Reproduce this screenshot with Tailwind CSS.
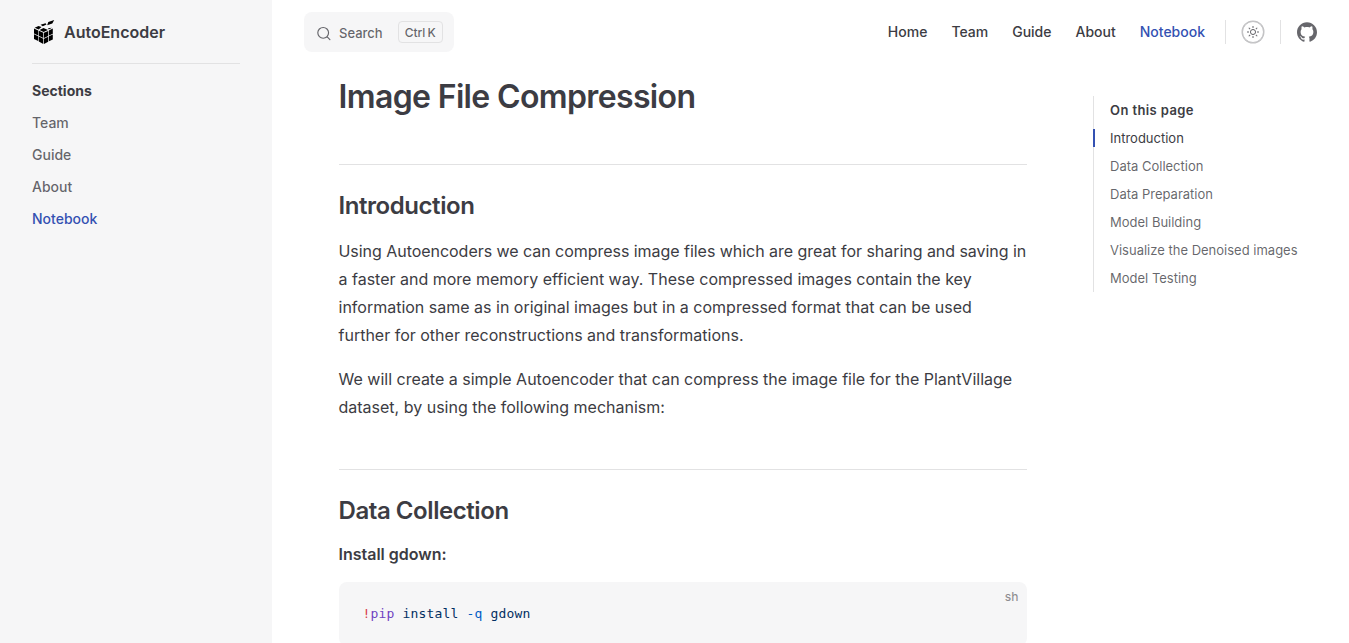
<!DOCTYPE html>
<html lang="en">
<head>
<meta charset="utf-8">
<title>Image File Compression | AutoEncoder</title>
<script src="https://cdn.jsdelivr.net/npm/@tailwindcss/browser@4"></script>
</head>
<body class="h-[643px] overflow-hidden bg-white font-['Inter',sans-serif] text-[#3c3c43] antialiased">
<div class="flex h-[643px]">
  <aside class="w-[272px] shrink-0 bg-[#f6f6f7] px-8">
    <div class="flex h-16 items-center border-b border-[#e2e2e3]">
      <svg class="mr-2 h-6 w-6" viewBox="0 0 24 24" fill="#000">
        <path d="M2 8.4 6.2 10.4V15.4L2 13.5ZM6.8 10.800 11.300 12.800V18L6.800 15.800ZM2 14.300 6.200 16.200V21L2 19ZM6.800 16.600 11.300 18.800V24L6.800 21.500ZM12 12.800 16.200 10.900V15.900L12 18ZM16.900 10.500 20.800 8.600V13.700L16.900 15.500ZM12 18.800 16.200 16.700V21.700L12 24ZM16.900 16.300 20.800 14.500V19.400L16.900 21.300ZM2.700 7.700 6.500 6 9.500 7.100 6.600 9.600ZM8.500 4.700 13.500 3.200 14.500 4.500 10.800 6.300ZM7.500 9.900 11.500 7.900 16 9.900 11.600 12.100ZM16 8.300 20 7.800 16.800 9.500ZM16.300 1.900 22.200 0 20.300 3.400 15.200 5.200Z"/>
      </svg>
      <span class="text-base font-semibold">AutoEncoder</span>
    </div>
    <nav class="flex flex-col pt-[11px] text-sm leading-8 font-medium text-[#3c3c43]/78">
      <h2 class="font-bold text-[#3c3c43]">Sections</h2>
      <a>Team</a><a>Guide</a><a>About</a><a class="text-[#3451b2]">Notebook</a>
    </nav>
  </aside>
  <div class="min-w-0 flex-1">
    <header class="flex h-16 items-center justify-between pr-8 pl-8">
      <div class="flex h-10 w-[150px] items-center rounded-lg bg-[#f6f6f7] pl-3 text-[13px] font-medium text-[#3c3c43]/78">
        <svg class="mt-0.5 mr-2 h-[15px] w-[15px]" viewBox="-1 0 21 20" fill="none" stroke="currentColor" stroke-width="1.6" stroke-linecap="round" stroke-linejoin="round"><path d="M14.386 14.386l4.0877 4.0877-4.0877-4.0877c-2.9418 2.9419-7.7115 2.9419-10.6533 0-2.9419-2.9418-2.9419-7.7115 0-10.6533 2.9418-2.9419 7.7115-2.9419 10.6533 0 2.9419 2.9418 2.9419 7.7115 0 10.6533z"/></svg>
        <span class="mt-[3px]">Search</span>
        <span class="ml-[15px] flex h-[22px] items-center gap-0.5 rounded border border-[#e2e2e3] px-1.5 pt-px text-xs"><kbd class="font-['Inter',sans-serif]">Ctrl</kbd><kbd class="font-['Inter',sans-serif]">K</kbd></span>
      </div>
      <nav class="flex items-center text-sm font-medium">
        <div class="flex gap-6"><a>Home</a><a>Team</a><a>Guide</a><a>About</a><a class="text-[#3451b2]">Notebook</a></div>
        <i class="mr-4 ml-5 h-6 w-px bg-[#e2e2e3]"></i>
        <span class="flex h-[22px] w-[22px] items-center justify-center rounded-full border border-[#c2c2c4] bg-white shadow-[0_0_0_0.5px_#c2c2c4]">
          <svg class="h-3 w-3" viewBox="0 0 24 24" fill="#3c3c43" fill-opacity=".78"><path d="M12,18c-3.3,0-6-2.7-6-6s2.7-6,6-6s6,2.7,6,6S15.3,18,12,18zM12,8c-2.2,0-4,1.8-4,4c0,2.2,1.8,4,4,4c2.2,0,4-1.8,4-4C16,9.800,14.200,8,12,8z"/><path d="M11 0h2v4h-2zM11 20h2v4h-2zM0 11h4v2H0zM20 11h4v2h-4zM2.800 4.200 4.200 2.800 7 5.600 5.600 7zM17 18.400 18.400 17 21.200 19.800 19.800 21.200zM2.800 19.800 5.600 17 7 18.400 4.200 21.200zM17 5.600 19.800 2.800 21.200 4.200 18.400 7z"/></svg>
        </span>
        <i class="mx-4 h-6 w-px bg-[#e2e2e3]"></i>
        <svg class="h-5 w-5" viewBox="0 0 24 24" fill="#3c3c43" fill-opacity=".78"><path d="M12 .297c-6.63 0-12 5.373-12 12 0 5.303 3.438 9.8 8.205 11.385.6.113.82-.258.82-.577 0-.285-.01-1.04-.015-2.04-3.338.724-4.042-1.61-4.042-1.61C4.422 18.07 3.633 17.7 3.633 17.7c-1.087-.744.084-.729.084-.729 1.205.084 1.838 1.236 1.838 1.236 1.07 1.835 2.809 1.305 3.495.998.108-.776.417-1.305.76-1.605-2.665-.3-5.466-1.332-5.466-5.93 0-1.31.465-2.38 1.235-3.22-.135-.303-.54-1.523.105-3.176 0 0 1.005-.322 3.3 1.23.96-.267 1.98-.399 3-.405 1.02.006 2.04.138 3 .405 2.28-1.552 3.285-1.23 3.285-1.23.645 1.653.24 2.873.12 3.176.765.84 1.23 1.91 1.23 3.22 0 4.61-2.805 5.625-5.475 5.92.42.36.81 1.096.81 2.22 0 1.606-.015 2.896-.015 3.286 0 .315.21.69.825.57C20.565 22.092 24 17.592 24 12.297c0-6.627-5.373-12-12-12"/></svg>
      </nav>
    </header>
    <div class="flex justify-between pr-8 pl-[66.5px]">
      <main class="w-[688px] pt-[13px]">
        <h1 class="text-[32px] leading-10 font-semibold tracking-[-0.02em]">Image File Compression</h1>
        <h2 class="mt-[47px] mb-[15px] border-t border-[#e2e2e3] pt-[25px] text-2xl leading-8 font-semibold tracking-[-0.018em]">Introduction</h2>
        <p class="mb-4 leading-7 whitespace-nowrap"><span class="tracking-[-0.04px]">Using Autoencoders we can compress image files which are great for sharing and saving in</span><br>a faster and more memory efficient way. These compressed images contain the key<br>information same as in original images but in a compressed format that can be used<br>further for other reconstructions and transformations.</p>
        <p class="my-4 leading-7">We will create a simple Autoencoder that can compress the image file for the PlantVillage dataset, by using the following mechanism:</p>
        <h2 class="mt-12 mb-[15px] border-t border-[#e2e2e3] pt-[25px] text-2xl leading-8 font-semibold tracking-[-0.018em]">Data Collection</h2>
        <h4 class="leading-6 font-semibold">Install gdown:</h4>
        <div class="relative mt-4 h-16 rounded-lg bg-[#f6f6f7] px-6 pt-5">
          <span class="absolute top-[6px] right-2 text-xs leading-[18px] font-medium text-[#3c3c43]/56">sh</span>
          <pre class="font-['DejaVu_Sans_Mono',monospace] text-[13px] leading-6 tracking-[0.174px] text-[#032f62]"><span class="text-[#d73a49]">!</span><span class="text-[#6f42c1]">pip</span> install <span class="text-[#005cc5]">-q</span> gdown</pre>
        </div>
      </main>
      <aside class="mt-8 h-[196px] w-[224px] shrink-0">
        <div class="relative border-l border-[#e2e2e3] pl-4 text-[13px] leading-7 text-[#3c3c43]/78">
          <i class="absolute top-[33px] -left-px h-[18px] w-0.5 bg-[#3451b2]"></i>
          <div class="font-semibold tracking-[0.4px] text-[#3c3c43]">On this page</div>
          <nav class="flex flex-col"><a class="text-[#3c3c43]">Introduction</a><a>Data Collection</a><a>Data Preparation</a><a>Model Building</a><a class="whitespace-nowrap">Visualize the Denoised images</a><a>Model Testing</a></nav>
        </div>
      </aside>
    </div>
  </div>
</div>
</body>
</html>
